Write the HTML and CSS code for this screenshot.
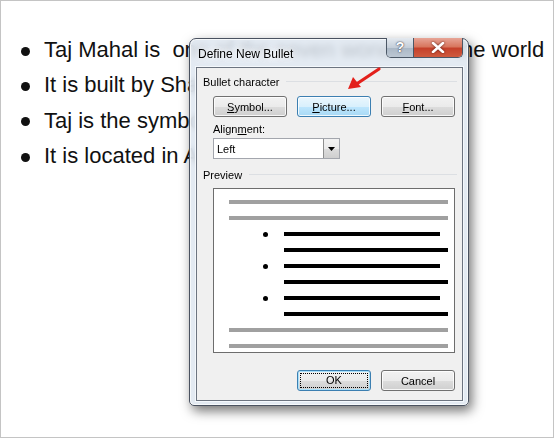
FILE: index.html
```html
<!DOCTYPE html>
<html lang="en">
<head>
  <meta charset="UTF-8" />
  <title>Define New Bullet</title>
  <link rel="stylesheet" href="styles.css">
</head>
<body>

<div class="slide">
  <ul class="points">
    <li><span class="dot"></span>Taj Mahal is&nbsp; one of the seven wonders of the world</li>
    <li><span class="dot"></span>It is built by Shah Jahan</li>
    <li><span class="dot"></span>Taj is the symbol of love</li>
    <li><span class="dot"></span>It is located in Agra</li>
  </ul>

  <div class="dialog">
    <div class="titlebar">
      <span class="title">Define New Bullet</span>
      <div class="caption-btns">
        <span class="cap-help">?</span>
        <span class="cap-close">
          <svg width="14" height="11" viewBox="0 0 14 11"><path d="M2 1 L12 10 M12 1 L2 10" stroke="#fff" stroke-width="2.6" stroke-linecap="round"/></svg>
        </span>
      </div>
    </div>

    <div class="panel">
      <div class="group-label"><span>Bullet character</span></div>
      <div class="btn-row">
        <button class="btn"><u>S</u>ymbol...</button>
        <button class="btn btn-hover"><u>P</u>icture...</button>
        <button class="btn"><u>F</u>ont...</button>
      </div>

      <div class="field-label">Align<u>m</u>ent:</div>
      <div class="combo">
        <span class="combo-value">Left</span>
        <span class="combo-arrow">
          <svg width="7" height="4" viewBox="0 0 7 4"><path d="M0 0 H7 L3.5 4 Z" fill="#000"/></svg>
        </span>
      </div>

      <div class="group-label preview-label"><span>Preview</span></div>
      <div class="preview">
        <div class="pv-line gray"></div>
        <div class="pv-line gray"></div>
        <div class="pv-row"><span class="pv-dot"></span><div class="pv-line black short"></div></div>
        <div class="pv-line black long"></div>
        <div class="pv-row"><span class="pv-dot"></span><div class="pv-line black short"></div></div>
        <div class="pv-line black long"></div>
        <div class="pv-row"><span class="pv-dot"></span><div class="pv-line black short"></div></div>
        <div class="pv-line black long"></div>
        <div class="pv-line gray"></div>
        <div class="pv-line gray"></div>
      </div>

      <div class="footer">
        <button class="btn btn-default"><span class="focus">OK</span></button>
        <button class="btn">Cancel</button>
      </div>
    </div>
  </div>

  <svg class="arrow" width="44" height="34" viewBox="0 0 44 34">
    <path d="M37 7 L16 21" stroke="#e3201b" stroke-width="3.2" stroke-linecap="round"/>
    <path d="M6 27 L11 15 L19 25 Z" fill="#e3201b"/>
  </svg>
</div>

</body>
</html>
```

FILE: styles.css
```css
html, body {
  margin: 0;
  background: #fff;
}
.slide {
  position: relative;
  width: 554px;
  height: 438px;
  box-sizing: border-box;
  border: 1px solid #c4c4c4;
  overflow: hidden;
  font-family: "Liberation Sans", Arial, sans-serif;
}
.points {
  list-style: none;
  margin: 0;
  padding: 31px 0 0 20px;
}
.points li {
  display: flex;
  align-items: center;
  font-size: 22px;
  line-height: 35.3px;
  color: #111;
  white-space: nowrap;
}
.dot {
  width: 9px;
  height: 9px;
  border-radius: 50%;
  background: #111;
  margin: 3px 14px 0 0;
  flex: none;
}

/* dialog window */
.dialog {
  position: absolute;
  left: 188px;
  top: 37px;
  width: 280px;
  height: 368px;
  box-sizing: border-box;
  border: 1px solid #4a5260;
  border-radius: 7px 7px 5px 5px;
  background: rgba(222, 230, 240, 0.84);
  backdrop-filter: blur(3px);
  box-shadow: 3px 5px 12px rgba(0, 0, 0, 0.55), inset 0 0 0 1px rgba(255, 255, 255, 0.7);
  display: flex;
  flex-direction: column;
}
.titlebar {
  height: 28px;
  display: flex;
  justify-content: space-between;
  align-items: flex-start;
}
.title {
  font-size: 12px;
  color: #000;
  padding: 8px 0 0 8px;
  text-shadow: 0 0 6px #fff, 0 0 6px #fff;
}
.caption-btns {
  display: flex;
  margin: -1px 5px 0 0;
  height: 19px;
  border: 1px solid #4b5766;
  border-top: none;
  border-radius: 0 0 5px 5px;
  overflow: hidden;
}
.cap-help {
  width: 26px;
  background: linear-gradient(#e4e9ef, #c4ced9 50%, #aab7c5 51%, #bcc7d3);
  color: #fff;
  font: bold 14px "Liberation Sans", sans-serif;
  text-align: center;
  line-height: 19px;
  text-shadow: 0 0 1px #445, 0 0 2px #445;
  border-right: 1px solid #4b5766;
}
.cap-close {
  width: 48px;
  background: linear-gradient(#e7a597, #d8775f 45%, #c5412b 55%, #cf5a3e);
  display: flex;
  align-items: center;
  justify-content: center;
}
.cap-close svg {
  filter: drop-shadow(0 0 1px #5a1a10);
}
.panel {
  flex: 1;
  margin: 0 5px 4px 6px;
  border: 1px solid #6c7480;
  box-shadow: 0 0 0 1px #f4f8fc;
  background: #f0f0f0;
  font-size: 11px;
  color: #000;
  display: flex;
  flex-direction: column;
}
.group-label {
  display: flex;
  align-items: center;
  margin: 7px 5px 0 6px;
  height: 13px;
}
.group-label::after {
  content: "";
  flex: 1;
  height: 1px;
  background: #dcdfe3;
  margin-left: 7px;
}
.btn-row {
  display: flex;
  gap: 10px;
  margin: 8px 0 0 16px;
}
.btn {
  width: 74px;
  height: 21px;
  box-sizing: border-box;
  padding: 0;
  border: 1px solid #707070;
  border-radius: 3px;
  background: linear-gradient(#f2f2f2, #ebebeb 50%, #dddddd 51%, #cfcfcf);
  box-shadow: inset 0 0 0 1px rgba(255, 255, 255, 0.8);
  font: 11px "Liberation Sans", Arial, sans-serif;
  color: #000;
}
.btn-hover {
  border-color: #3c7fb1;
  background: linear-gradient(#eaf6fd, #d9f0fc 50%, #bee6fd 51%, #a7d9f5);
}
.field-label {
  margin: 6px 0 0 16px;
  height: 13px;
}
.combo {
  width: 127px;
  height: 21px;
  box-sizing: border-box;
  margin: 2px 0 0 16px;
  border: 1px solid #a3a6ad;
  background: #fff;
  display: flex;
  align-items: center;
}
.combo-value {
  flex: 1;
  padding-left: 3px;
}
.combo-arrow {
  width: 16px;
  height: 19px;
  box-sizing: border-box;
  border-left: 1px solid #8e8f8f;
  background: linear-gradient(#f2f2f2, #ebebeb 50%, #dddddd 51%, #cfcfcf);
  display: flex;
  align-items: center;
  justify-content: center;
}
.preview-label {
  margin-top: 9px;
}
.preview {
  width: 242px;
  height: 165px;
  box-sizing: border-box;
  margin: 7px 0 0 16px;
  border: 1px solid #6d6d6d;
  background: #fff;
  padding: 11px 0 0 15px;
  display: flex;
  flex-direction: column;
  gap: 12px;
}
.pv-line {
  height: 4px;
  width: 219px;
}
.pv-line.gray {
  background: #a0a0a0;
}
.pv-line.black {
  background: #000;
}
.pv-line.long {
  width: 164px;
  margin-left: 55px;
}
.pv-line.short {
  width: 156px;
}
.pv-row {
  display: flex;
  align-items: center;
  height: 4px;
  padding-left: 34px;
  gap: 16px;
}
.pv-dot {
  width: 5px;
  height: 5px;
  border-radius: 50%;
  background: #000;
}
.footer {
  display: flex;
  gap: 10px;
  margin: 17px 0 0 100px;
}
.btn-default {
  border-color: #3c7fb1;
  box-shadow: inset 0 0 0 1px #a8e0fb;
  padding: 2px;
}
.focus {
  display: block;
  height: 100%;
  box-sizing: border-box;
  border: 1px dotted #000;
  line-height: 13px;
}
.arrow {
  position: absolute;
  left: 341px;
  top: 61px;
}
```
